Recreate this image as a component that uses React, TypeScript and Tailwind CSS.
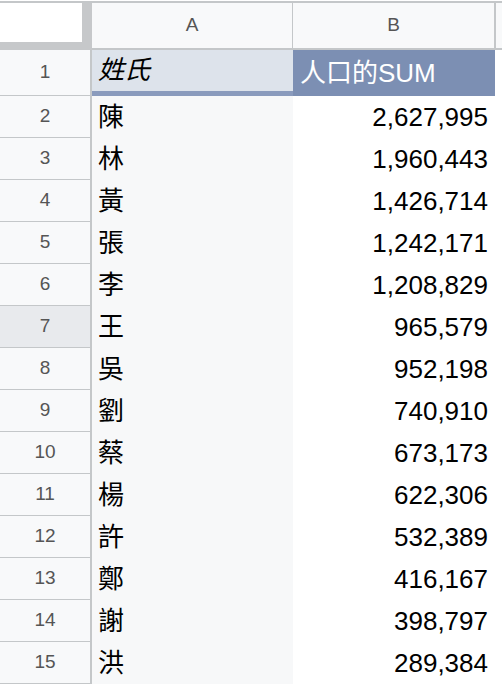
const rows: [string, string][] = [
  ["陳", "2,627,995"],
  ["林", "1,960,443"],
  ["黃", "1,426,714"],
  ["張", "1,242,171"],
  ["李", "1,208,829"],
  ["王", "965,579"],
  ["吳", "952,198"],
  ["劉", "740,910"],
  ["蔡", "673,173"],
  ["楊", "622,306"],
  ["許", "532,389"],
  ["鄭", "416,167"],
  ["謝", "398,797"],
  ["洪", "289,384"],
];

const font = {
  fontFamily: '"Liberation Sans", "Noto Sans CJK TC", sans-serif',
};

const App = () => {
  return (
    <div className="w-[502px] h-[688px] overflow-hidden bg-white" style={font}>
      <div className="h-[1px] bg-white" />
      <div className="h-[2px] bg-[#c4c7c9]" />

      {/* column headers */}
      <div className="flex h-[47px]">
        <div className="w-[92px] bg-white border-r-[10px] border-b-[8px] border-[#c6c8ca]" />
        <div className="w-[201px] bg-[#f8f9fa] border-r border-b-2 border-[#c4c7c9] flex items-center justify-center text-[19px] text-[#555]">
          A
        </div>
        <div className="w-[203px] bg-[#f8f9fa] border-r-2 border-b-2 border-[#c4c7c9] flex items-center justify-center text-[19px] text-[#555]">
          B
        </div>
        <div className="flex-1 bg-[#f8f9fa] border-b-2 border-[#c4c7c9]" />
      </div>

      {/* pivot header row */}
      <div className="flex h-[46px]">
        <div className="w-[92px] bg-[#f8f9fa] border-r-2 border-b border-[#c4c7c9] flex items-center justify-center text-[19px] text-[#555]">
          1
        </div>
        <div className="w-[201px] flex flex-col">
          <div className="flex-1 bg-[#dde3eb] pl-[6px] flex items-center text-[26px] italic text-black">
            姓氏
          </div>
          <div className="h-[5px] bg-[#8a9bbd]" />
        </div>
        <div className="w-[202px] bg-[#7c8fb3] pl-[7px] flex items-center text-[26px] text-white">
          人口的SUM
        </div>
        <div className="flex-1 bg-white" />
      </div>

      {rows.map(([name, sum], i) => (
        <div key={name} className="flex h-[42px]">
          <div
            className={
              i === 5
                ? "w-[92px] bg-[#e8eaed] border-r-2 border-b border-[#c4c7c9] flex items-center justify-center text-[19px] text-[#555]"
                : "w-[92px] bg-[#f8f9fa] border-r-2 border-b border-[#c4c7c9] flex items-center justify-center text-[19px] text-[#555]"
            }
          >
            {i + 2}
          </div>
          <div className="w-[201px] bg-[#f7f8f9] pl-[6px] flex items-center text-[26px] text-black">
            {name}
          </div>
          <div className="w-[203px] bg-white pr-[8px] flex items-center justify-end text-[26px] text-black">
            {sum}
          </div>
          <div className="flex-1 bg-white" />
        </div>
      ))}
    </div>
  );
};

export default App;
